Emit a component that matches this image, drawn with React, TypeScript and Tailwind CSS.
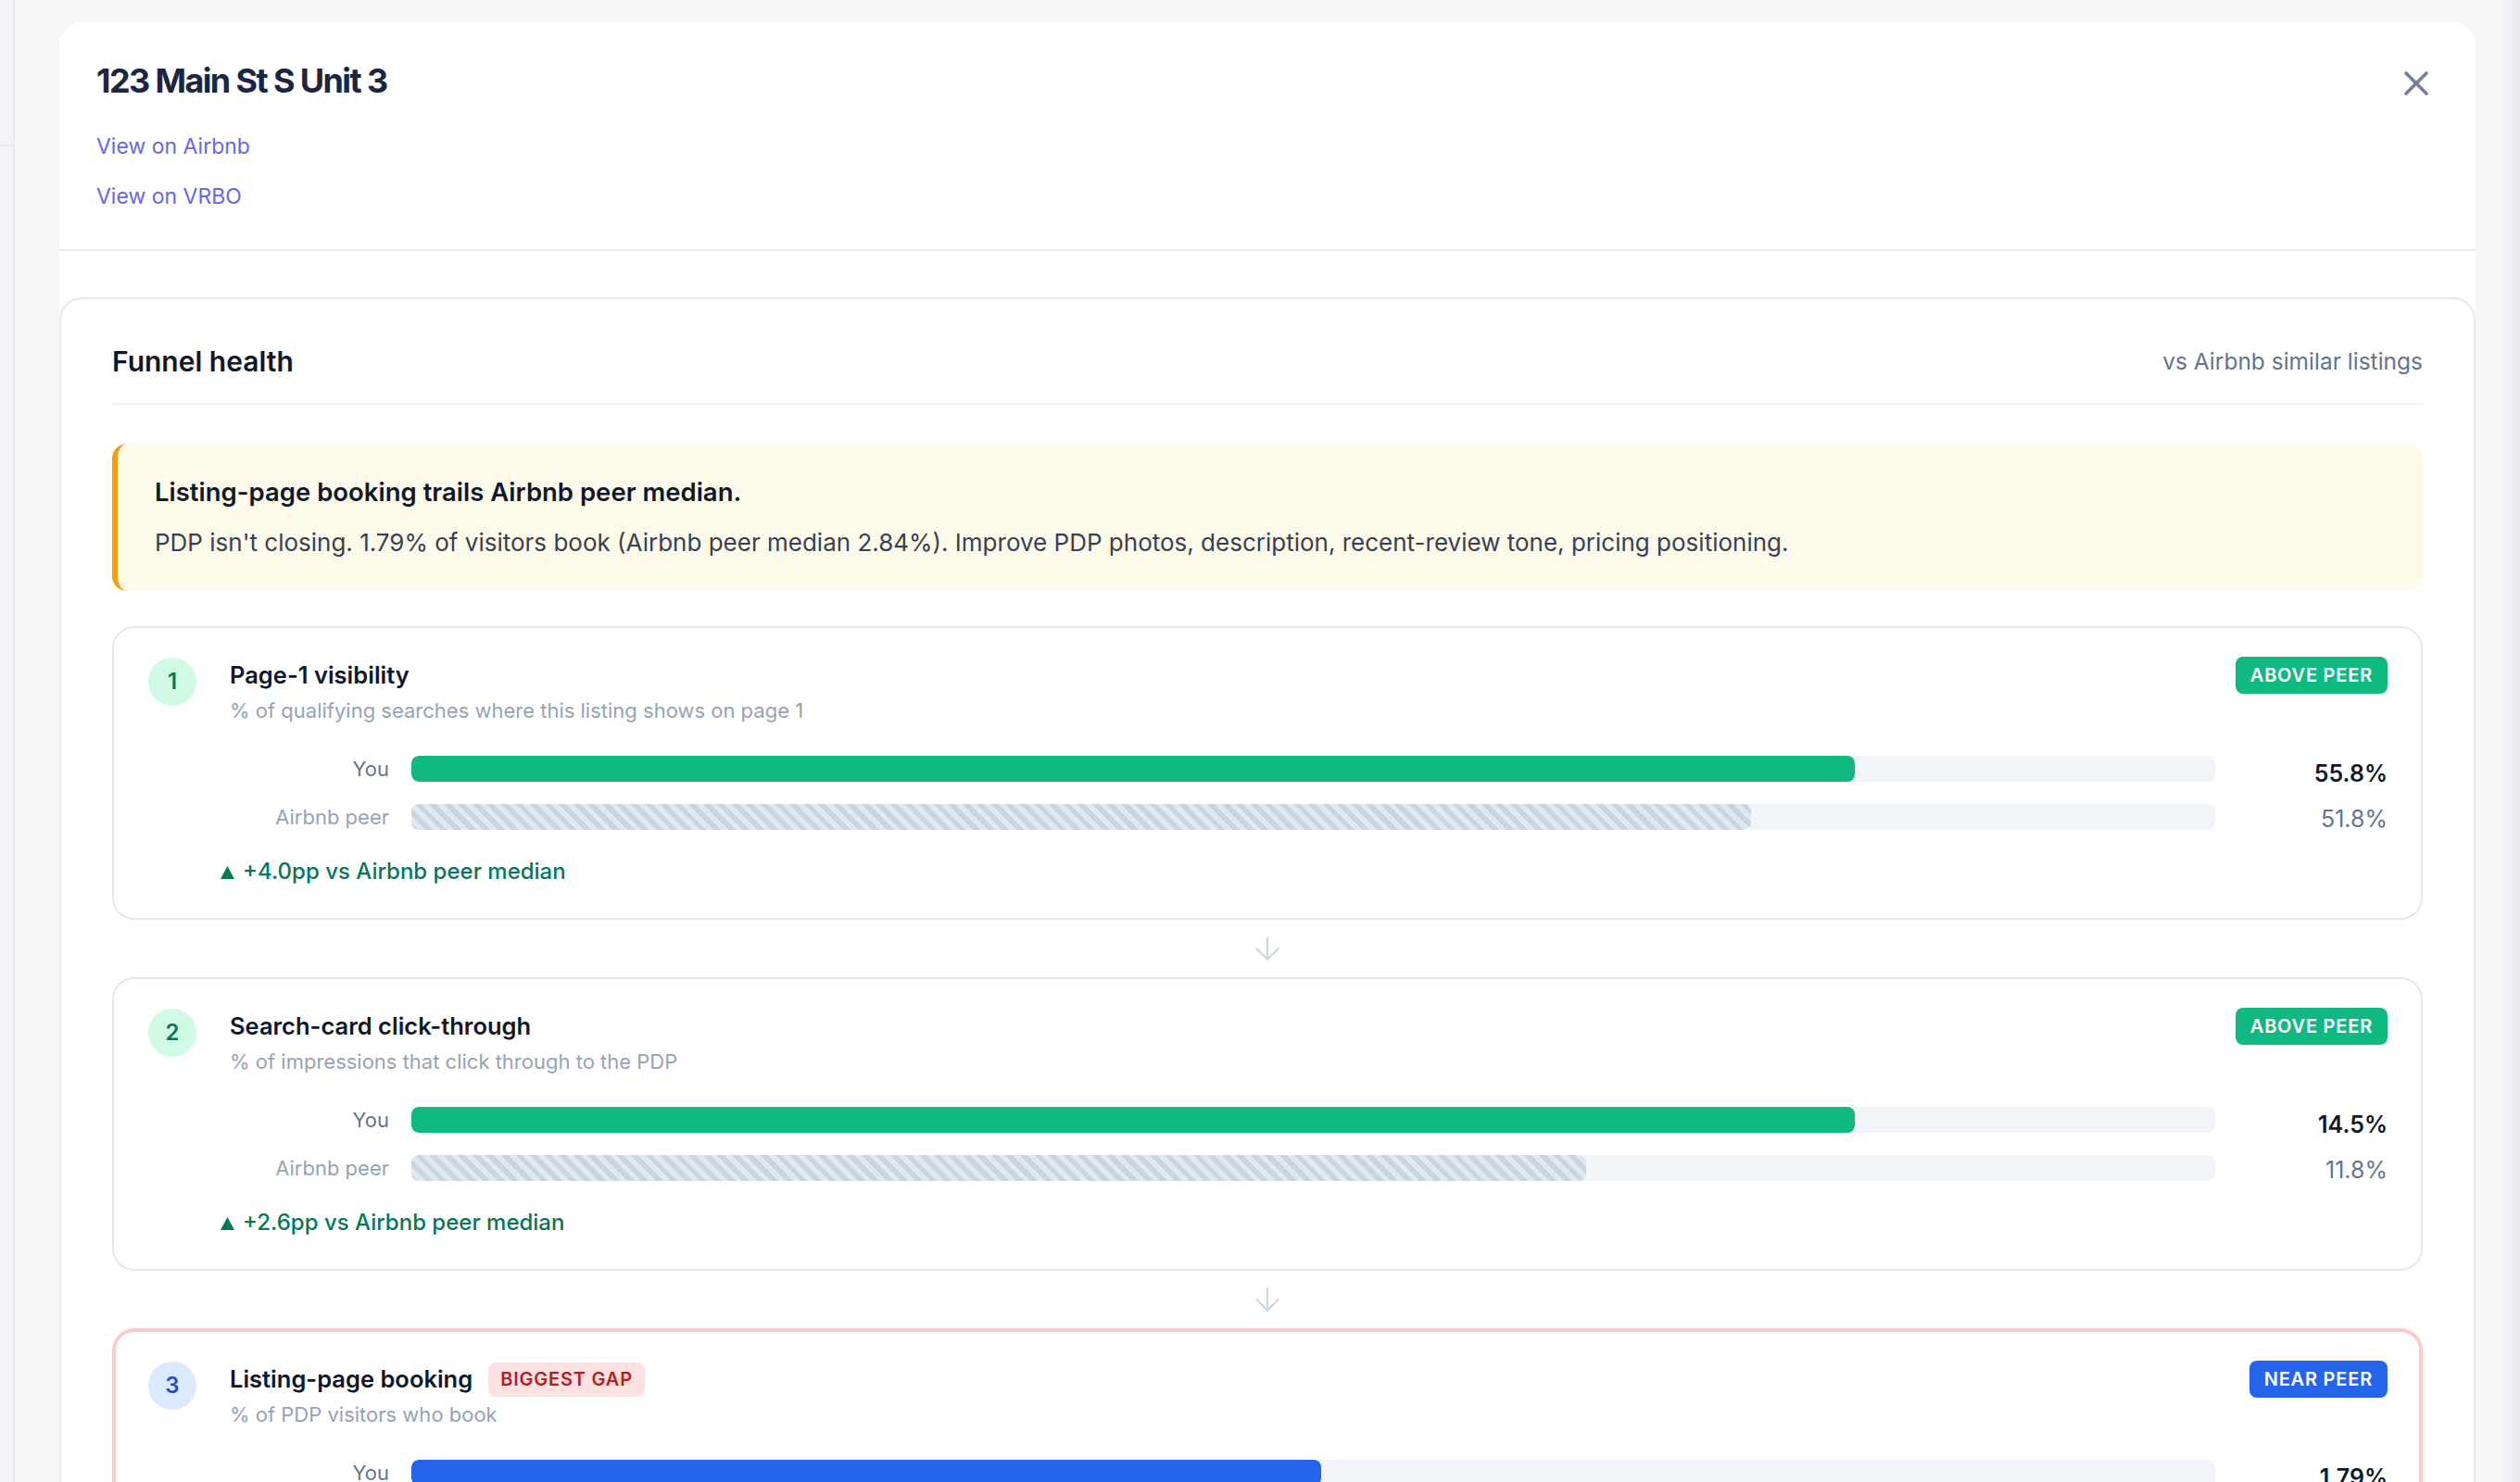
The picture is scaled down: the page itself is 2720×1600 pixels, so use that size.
import { X, ArrowDown } from "lucide-react";

type Stage = {
  n: number;
  title: string;
  sub: string;
  you: number;
  peer: number;
  youLabel: string;
  peerLabel: string;
  badge: string;
  tone: "green" | "blue";
  gap?: boolean;
  delta: string;
};

const stages: Stage[] = [
  {
    n: 1,
    title: "Page-1 visibility",
    sub: "% of qualifying searches where this listing shows on page 1",
    you: 55.8,
    peer: 51.8,
    youLabel: "55.8%",
    peerLabel: "51.8%",
    badge: "ABOVE PEER",
    tone: "green",
    delta: "+4.0pp vs Airbnb peer median",
  },
  {
    n: 2,
    title: "Search-card click-through",
    sub: "% of impressions that click through to the PDP",
    you: 14.5,
    peer: 11.8,
    youLabel: "14.5%",
    peerLabel: "11.8%",
    badge: "ABOVE PEER",
    tone: "green",
    delta: "+2.6pp vs Airbnb peer median",
  },
  {
    n: 3,
    title: "Listing-page booking",
    sub: "% of PDP visitors who book",
    you: 1.79,
    peer: 2.84,
    youLabel: "1.79%",
    peerLabel: "2.84%",
    badge: "NEAR PEER",
    tone: "blue",
    gap: true,
    delta: "-1.05pp vs Airbnb peer median",
  },
];

function BarRow({
  label,
  value,
  pct,
  kind,
  tone,
}: {
  label: string;
  value: string;
  pct: number;
  kind: "you" | "peer";
  tone: "green" | "blue";
}) {
  const fill =
    kind === "peer"
      ? "bg-[repeating-linear-gradient(45deg,#cbd5e1_0px,#cbd5e1_5.5px,#e2e8f0_5.5px,#e2e8f0_11px)]"
      : tone === "green"
        ? "bg-[#10b981]"
        : "bg-[#2563eb]";

  return (
    <div className="flex h-[28px] items-center gap-[24px]">
      <div
        className={
          kind === "you"
            ? "w-[182px] text-right text-[22px] text-[#64748b]"
            : "w-[182px] text-right text-[22px] text-[#94a3b8]"
        }
      >
        {label}
      </div>
      <div className="h-[28px] flex-1 overflow-hidden rounded-[8px] bg-[#f1f5f9]">
        <div className={`h-full rounded-[8px] ${fill}`} style={{ width: `${pct}%` }} />
      </div>
      <div
        className={
          kind === "you"
            ? "w-[162px] pt-[11px] text-right text-[25px] font-semibold text-[#0f172a]"
            : "w-[162px] pt-[5px] text-right text-[25px] text-[#64748b]"
        }
      >
        {value}
      </div>
    </div>
  );
}

function StageCard({ s }: { s: Stage }) {
  const max = Math.max(s.you, s.peer) * 1.25;
  const green = s.tone === "green";

  return (
    <div
      className={
        s.gap
          ? "rounded-[24px] border-4 border-[#fecaca] pb-[30px] pl-[35px] pr-[34px] pt-[31px]"
          : "rounded-[24px] border-2 border-[#e2e8f0] pb-[32px] pl-[37px] pr-[36px] pt-[31px]"
      }
    >
      <div className="flex items-start">
        <div
          className={
            green
              ? "mt-[1px] flex h-[52px] w-[52px] shrink-0 items-center justify-center rounded-full bg-[#d1fae5] text-[24px] font-semibold text-[#047857]"
              : "mt-[1px] flex h-[52px] w-[52px] shrink-0 items-center justify-center rounded-full bg-[#dbeafe] text-[24px] font-semibold text-[#1d4ed8]"
          }
        >
          {s.n}
        </div>
        <div className="ml-[36px] flex-1 pt-[2px]">
          <div className="flex h-[36px] items-center gap-[17px]">
            <span className="text-[25.5px] font-semibold text-[#0f172a]">{s.title}</span>
            {s.gap && (
              <span className="flex h-[37px] items-center rounded-[8px] bg-[#fee2e2] px-[13px] text-[20px] font-semibold tracking-[0.04em] text-[#b91c1c]">
                BIGGEST GAP
              </span>
            )}
          </div>
          <div className="mt-[4px] text-[22px] leading-[32px] text-[#94a3b8]">{s.sub}</div>
        </div>
        <div
          className={
            green
              ? "flex h-[40px] items-center rounded-[8px] bg-[#10b981] px-[16px] text-[20px] font-semibold tracking-[0.04em] text-white"
              : "flex h-[40px] items-center rounded-[8px] bg-[#2563eb] px-[16px] text-[20px] font-semibold tracking-[0.04em] text-white"
          }
        >
          {s.badge}
        </div>
      </div>

      <div className="ml-[78px] mt-[33px] flex flex-col gap-[24px]">
        <BarRow label="You" value={s.youLabel} pct={(s.you / max) * 100} kind="you" tone={s.tone} />
        <BarRow
          label="Airbnb peer"
          value={s.peerLabel}
          pct={(s.peer / max) * 100}
          kind="peer"
          tone={s.tone}
        />
      </div>

      <div className="ml-[78px] mt-[27px] flex h-[36px] items-center gap-[9px] text-[24px] font-medium text-[#047857]">
        <svg width="15" height="14" viewBox="0 0 15 14" className="mt-[2px]">
          <polygon points="7.5,0 15,14 0,14" fill="currentColor" />
        </svg>
        <span>{s.delta}</span>
      </div>
    </div>
  );
}

function Connector() {
  return (
    <div className="flex h-[62px] items-center justify-center">
      <ArrowDown size={40} strokeWidth={1.25} className="text-[#cbd5e1]" />
    </div>
  );
}

export default function App() {
  return (
    <div className="relative flex h-[1600px] w-[2720px] overflow-hidden bg-[#f6f7f9] font-['Inter',sans-serif]">
      {/* page underneath */}
      <div className="w-[16px] shrink-0 border-r-2 border-[#e7e9ee] bg-[#f3f4f7] pt-[156px]">
        <div className="h-[2px] bg-[#e7e9ee]" />
      </div>
      <div className="w-[48px] shrink-0" />

      <div className="mt-[24px] w-[2608px] shrink-0 rounded-t-[24px] bg-white">
        {/* Header */}
        <div className="flex items-start justify-between border-b-2 border-[#e8ebf0] px-[40px] pb-[39px] pt-[39px]">
          <div>
            <h1 className="text-[36px] font-bold leading-[48px] tracking-[-0.045em] text-[#1c2541]">
              123 Main St S Unit 3
            </h1>
            <a className="mt-[29px] block text-[23px] leading-[36px] text-[#6366f1]">View on Airbnb</a>
            <a className="mt-[18px] block text-[23px] leading-[36px] text-[#6366f1]">View on VRBO</a>
          </div>
          <button className="mt-[3px] flex h-[48px] w-[48px] items-center justify-center text-[#787f99]">
            <X size={44} strokeWidth={2} />
          </button>
        </div>

        {/* Body */}
        <div className="pt-[50px]">
          <div className="rounded-t-[24px] border-2 border-b-0 border-[#e5e7eb] px-[55px] pt-[47px]">
            <div className="border-b-2 border-[#eef0f3] pb-[25px]">
              <div className="flex h-[40px] items-center justify-between">
                <h2 className="text-[30px] font-semibold text-[#0f172a]">Funnel health</h2>
                <span className="text-[24.5px] text-[#64748b]">vs Airbnb similar listings</span>
              </div>
            </div>

            <div className="mt-[42px] rounded-[16px] border-l-[6px] border-[#f59e0b] bg-[#fefae9] py-[32px] pl-[40px] pr-[40px]">
              <div className="text-[27.5px] font-semibold leading-[40px] text-[#0f172a]">
                Listing-page booking trails Airbnb peer median.
              </div>
              <div className="mt-[15px] text-[26px] leading-[40px] text-[#374151]">
                PDP isn't closing. 1.79% of visitors book (Airbnb peer median 2.84%). Improve PDP
                photos, description, recent-review tone, pricing positioning.
              </div>
            </div>

            <div className="mt-[38px]">
              <StageCard s={stages[0]} />
              <Connector />
              <StageCard s={stages[1]} />
              <Connector />
              <StageCard s={stages[2]} />
            </div>
          </div>
        </div>
      </div>

      <div className="flex-1 bg-[linear-gradient(to_right,#f6f7f9_55%,#e8eaee)]" />
    </div>
  );
}
